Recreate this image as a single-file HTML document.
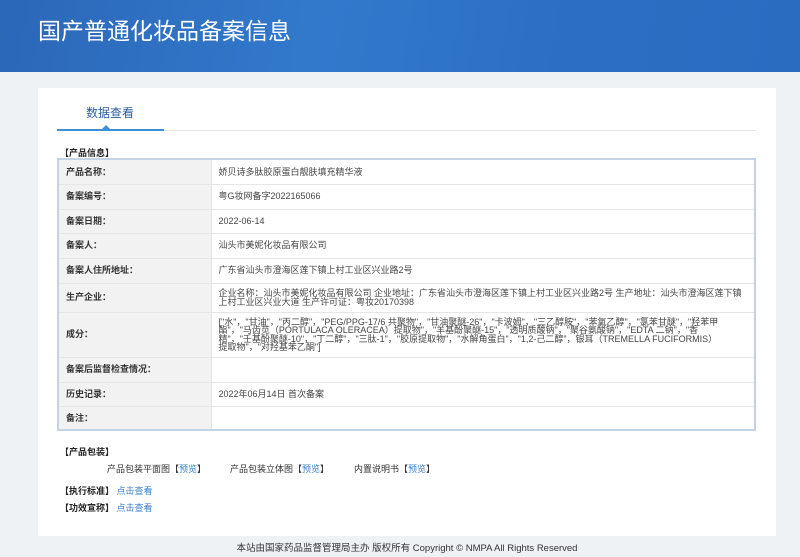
<!DOCTYPE html>
<html><head><meta charset="utf-8"><style>
*{margin:0;padding:0;box-sizing:border-box}
body{width:800px;height:557px;overflow:hidden;background:#eef2f5;font-family:"Liberation Sans","Noto Sans CJK SC",sans-serif;font-size:9px;color:#333;position:relative}
.hd{position:absolute;left:0;top:0;width:800px;height:72px;background:linear-gradient(100deg,#2c67b8 0%,#3279cc 40%,#2b6fc4 70%,#2a6cc0 100%)}
.hd h1{position:absolute;left:38px;top:12px;font-size:23px;font-weight:normal;color:#fff}
.pn{position:absolute;left:38px;top:88px;width:738px;height:448px;background:#fff}
.tab{position:absolute;left:86px;top:104px;font-size:12px;color:#2a5d9f}
.ul{position:absolute;left:57px;top:130px;width:699px;height:1px;background:#e3e6ea}
.ul2{position:absolute;left:57px;top:129px;width:107px;height:2px;background:#3d8fd8}
.tri{position:absolute;left:102px;top:125px;width:0;height:0;border-left:4px solid transparent;border-right:4px solid transparent;border-bottom:4px solid #3d8fd8}
.sec{position:absolute;font-size:9px;font-weight:bold;color:#222}
table{position:absolute;left:57px;top:158px;width:699px;border-collapse:collapse;border:2px solid #c3d2e6}
td{border-bottom:1px solid #e6e6e6;font-size:9px;padding:0 7px;vertical-align:middle;line-height:8.5px}
td.l{width:153px;background:#f2f2f2;font-weight:bold;color:#333;border-right:1px solid #e6e6e6}
td.v{color:#444}
.a{color:#3a7fd0}
.ft{position:absolute;left:0;top:540px;width:814px;text-align:center;font-size:9.5px;color:#333}
</style></head><body>
<div class="hd"><h1>国产普通化妆品备案信息</h1></div>
<div class="pn"></div>
<div class="tab">数据查看</div>
<div class="ul"></div><div class="ul2"></div><div class="tri"></div>
<div class="sec" style="left:60px;top:146px">【产品信息】</div>
<table>
<tr style="height:25px"><td class="l">产品名称：</td><td class="v">娇贝诗多肽胶原蛋白靓肤填充精华液</td></tr>
<tr style="height:25px"><td class="l">备案编号：</td><td class="v">粤G妆网备字2022165066</td></tr>
<tr style="height:24px"><td class="l">备案日期：</td><td class="v">2022-06-14</td></tr>
<tr style="height:25px"><td class="l">备案人：</td><td class="v">汕头市美妮化妆品有限公司</td></tr>
<tr style="height:25px"><td class="l">备案人住所地址：</td><td class="v">广东省汕头市澄海区莲下镇上村工业区兴业路2号</td></tr>
<tr style="height:29px"><td class="l">生产企业：</td><td class="v">企业名称：汕头市美妮化妆品有限公司 企业地址：广东省汕头市澄海区莲下镇上村工业区兴业路2号 生产地址：汕头市澄海区莲下镇上村工业区兴业大道 生产许可证：粤妆20170398</td></tr>
<tr style="height:45px"><td class="l">成分：</td><td class="v" style="padding-right:30px">["水"，"甘油"，"丙二醇"，"PEG/PPG-17/6 共聚物"，"甘油聚醚-26"，"卡波姆"，"三乙醇胺"，"苯氧乙醇"，"氯苯甘醚"，"羟苯甲酯"，"马齿苋（PORTULACA OLERACEA）提取物"，"羊基酚聚醚-15"，"透明质酸钠"，"聚谷氨酸钠"，"EDTA 二钠"，"香精"，"壬基酚聚醚-10"，"丁二醇"，"三肽-1"，"胶原提取物"，"水解角蛋白"，"1,2-己二醇"，银耳（TREMELLA FUCIFORMIS）提取物"，"对羟基苯乙酮"]</td></tr>
<tr style="height:25px"><td class="l">备案后监督检查情况：</td><td class="v"></td></tr>
<tr style="height:24px"><td class="l">历史记录：</td><td class="v">2022年06月14日 首次备案</td></tr>
<tr style="height:24px"><td class="l">备注：</td><td class="v"></td></tr>
</table>
<div class="sec" style="left:60px;top:445px">【产品包装】</div>
<div style="position:absolute;left:107px;top:462px">产品包装平面图【<span class="a">预览</span>】</div>
<div style="position:absolute;left:230px;top:462px">产品包装立体图【<span class="a">预览</span>】</div>
<div style="position:absolute;left:354px;top:462px">内置说明书【<span class="a">预览</span>】</div>
<div class="sec" style="left:60px;top:484px">【执行标准】 <span class="a" style="font-weight:normal">点击查看</span></div>
<div class="sec" style="left:60px;top:501px">【功效宣称】 <span class="a" style="font-weight:normal">点击查看</span></div>
<div class="ft">本站由国家药品监督管理局主办 版权所有 Copyright © NMPA All Rights Reserved</div>
</body></html>
